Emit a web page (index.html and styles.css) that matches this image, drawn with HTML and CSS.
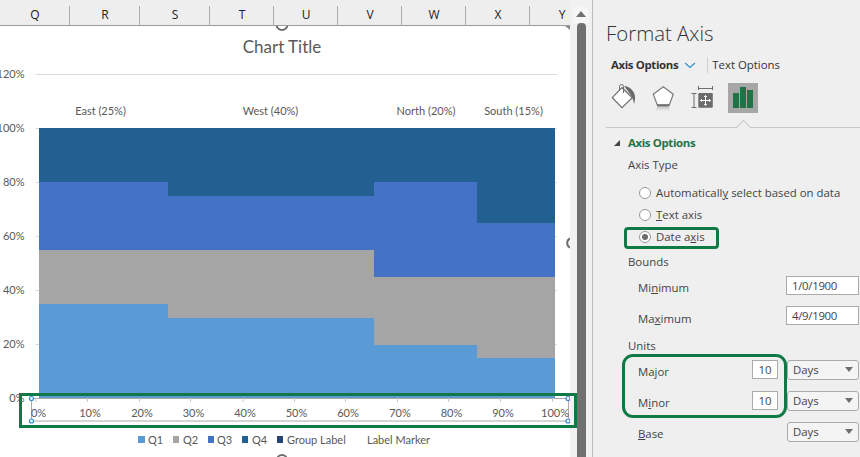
FILE: index.html
```html
<!DOCTYPE html>
<html lang="en">
<head>
<meta charset="utf-8">
<title>Format Axis</title>
<link rel="stylesheet" href="styles.css">
</head>
<body>
<div class="app">
  <div class="sheet">
    <div class="workspace">
      <div class="col-head">
        <div class="col c70">Q</div><div class="col c70">R</div><div class="col c70">S</div>
        <div class="col c64">T</div><div class="col c64">U</div><div class="col c64">V</div>
        <div class="col c64">W</div><div class="col c64">X</div><div class="col c64">Y</div>
      </div>
      <div class="chart-wrap">
        <svg class="chart" width="570" height="431" viewBox="0 26 570 431">
          <rect x="0" y="26" width="570" height="431" fill="#fff"/>
          <circle class="ring" cx="282" cy="24.500" r="5.500"/>
          <circle class="ring" cx="282" cy="460" r="5"/>
          <path class="ring" d="M570 238.500a5 5 0 0 0 0 9"/>
          <path d="M565 26h5v4z" fill="#8a8a8a"/>
          <text class="title" x="282" y="53" text-anchor="middle">Chart Title</text>

          <g class="grid">
            <path d="M35.500 74.500H557M35.500 128.500H557M35.500 182.500H557M35.500 236.500H557M35.500 290.500H557M35.500 344.500H557"/>
          </g>
          <g class="lbl" text-anchor="end">
            <text x="24.500" y="77.500">120%</text><text x="24.500" y="131.500">100%</text>
            <text x="24.500" y="185.500">80%</text><text x="24.500" y="239.500">60%</text>
            <text x="24.500" y="293.500">40%</text><text x="24.500" y="347.500">20%</text>
            <text x="24.500" y="401.500">0%</text>
          </g>
          <g class="lbl" text-anchor="middle">
            <text x="100.500" y="115">East (25%)</text>
            <text x="270.500" y="115">West (40%)</text>
            <text x="426" y="115">North (20%)</text>
            <text x="513.500" y="115">South (15%)</text>
          </g>

          <path fill="#236092" d="M39 128H555V223H477V182H374V196H168V182H39Z"/>
          <path fill="#4472C4" d="M39 182H168V196H374V182H477V223H555V277H374V250H39Z"/>
          <path fill="#A5A5A5" d="M39 250H374V277H555V358H477V345H374V318H168V304H39Z"/>
          <path fill="#5B9BD5" d="M39 304H168V318H374V345H477V358H555V398H39Z"/>

          <rect class="axis-box" x="31.500" y="398.500" width="537" height="22.500"/>
          <path class="tick" d="M36 398v4M87.500 398v4M139.500 398v4M190.500 398v4M243 398v4M294.500 398v4M345.500 398v4M397.500 398v4M448.500 398v4M500.500 398v4M552.500 398v4"/>
          <g class="lbl" text-anchor="middle">
            <text x="38.500" y="417">0%</text><text x="90" y="417">10%</text>
            <text x="142" y="417">20%</text><text x="193.500" y="417">30%</text>
            <text x="245" y="417">40%</text><text x="296.500" y="417">50%</text>
            <text x="348" y="417">60%</text><text x="400" y="417">70%</text>
            <text x="451.500" y="417">80%</text><text x="503" y="417">90%</text>
            <text x="555" y="417">100%</text>
          </g>
          <g class="handle">
            <circle cx="31.500" cy="398.500" r="2"/><circle cx="31.500" cy="421" r="2"/>
            <circle cx="568" cy="398.500" r="2"/><circle cx="568" cy="421" r="2"/>
          </g>

          <g class="lbl">
            <rect x="138" y="436" width="7" height="7" fill="#5B9BD5"/><text x="148" y="444">Q1</text>
            <rect x="173" y="436" width="6" height="7" fill="#A5A5A5"/><text x="183" y="444">Q2</text>
            <rect x="208" y="436" width="6" height="7" fill="#4472C4"/><text x="217" y="444">Q3</text>
            <rect x="242" y="436" width="6" height="7" fill="#236092"/><text x="252" y="444">Q4</text>
            <rect x="277" y="436" width="6" height="7" fill="#264478"/><text x="287" y="444">Group Label</text>
            <text x="367" y="444">Label Marker</text>
          </g>
        </svg>
        <div class="callout callout-axis"></div>
      </div>
    </div>
    <div class="scrollbar">
      <div class="scroll-up"></div>
      <div class="scroll-thumb"></div>
    </div>
  </div>

  <aside class="pane">
    <h1 class="pane-title">Format Axis</h1>
    <div class="tabs">
      <span class="tab-strong">Axis Options</span>
      <svg class="tab-chevron" width="12" height="7" viewBox="0 0 12 7"><path d="M1 1l5 4.500L11 1" fill="none" stroke="#2e8fd6" stroke-width="1.200"/></svg>
      <span class="tab-sep"></span>
      <span class="tab-plain">Text Options</span>
    </div>
    <div class="icons">
      <svg class="icon" width="30" height="30" viewBox="0 0 30 30">
        <path d="M16 3C21 3 25 7 26.500 11 27.500 14 27 18 26 21 25.500 18 25 15 22 11Z" fill="#6a6a6a"/>
        <path d="M4.300 14.700L14 4.700 24.300 14.700 14 24.700Z" fill="#fff" stroke="#6e6e6e" stroke-width="1.200"/>
        <path d="M11.500 7V3.500a2 2 0 0 1 4 0V10" fill="none" stroke="#6e6e6e" stroke-width="1"/>
      </svg>
      <svg class="icon" width="30" height="30" viewBox="0 0 30 30">
        <defs><linearGradient id="fade" x1="0" y1="0" x2="0" y2="1"><stop offset="0" stop-color="#bdbdbd"/><stop offset="1" stop-color="#efefef"/></linearGradient></defs>
        <path d="M9.500 23h11l2 5H7.500Z" fill="url(#fade)"/>
        <path d="M15.300 3.700L25.300 11.300 21.300 22H9.300L5.300 11.300Z" fill="#fff" stroke="#7a7a7a" stroke-width="1.200"/>
        <path d="M9 22.300h12.500" stroke="#6e6e6e" stroke-width="2"/>
      </svg>
      <svg class="icon" width="30" height="30" viewBox="0 0 30 30">
        <path d="M10.500 3v4M24.500 3v4M10.500 5.500h14M3.500 10.500h5M3.500 24.500h5M6 10.500v14" fill="none" stroke="#6e6e6e" stroke-width="1"/>
        <rect x="10.300" y="10" width="14.500" height="14.700" rx="1" fill="#6b6b6b"/>
        <path d="M17.500 12.500v10M12.500 17.500h10M16.200 14l1.300-1.500 1.300 1.500M16.200 21l1.300 1.500 1.300-1.500M14 16.200l-1.500 1.300 1.500 1.300M21 16.200l1.500 1.300-1.500 1.300" fill="none" stroke="#fff" stroke-width="1"/>
      </svg>
      <div class="icon-active">
        <svg width="30" height="30" viewBox="0 0 30 30">
          <rect x="5" y="10" width="6" height="15" fill="#217346"/>
          <rect x="12" y="4" width="6" height="21" fill="#217346"/>
          <rect x="19" y="7" width="6" height="18" fill="#217346"/>
        </svg>
      </div>
    </div>
    <div class="divider"></div>

    <div class="section-head"><span class="caret"></span><span>Axis Options</span></div>
    <div class="row row-type">Axis Type</div>
    <div class="radios">
      <div class="radio-row"><span class="radio"></span><span>Automaticall<u>y</u> select based on data</span></div>
      <div class="radio-row"><span class="radio"></span><span><u>T</u>ext axis</span></div>
      <div class="radio-row"><span class="radio radio-on"></span><span>Date a<u>x</u>is</span></div>
    </div>
    <div class="row row-bounds">Bounds</div>
    <div class="field field-first"><span class="field-label">Mi<u>n</u>imum</span><div class="input input-wide">1/0/1900</div></div>
    <div class="field field-max"><span class="field-label field-label-low">Ma<u>x</u>imum</span><div class="input input-wide">4/9/1900</div></div>
    <div class="row row-units">Units</div>
    <div class="field field-first"><span class="field-label">Ma<u>j</u>or</span><div class="input input-num">10</div><div class="select">Days<span class="select-arrow"></span></div></div>
    <div class="field"><span class="field-label">M<u>i</u>nor</span><div class="input input-num">10</div><div class="select">Days<span class="select-arrow"></span></div></div>
    <div class="field"><span class="field-label"><u>B</u>ase</span><div class="select">Days<span class="select-arrow"></span></div></div>
    <div class="row row-next">Vertical axis crosses</div>

    <div class="callout callout-date"></div>
    <div class="callout callout-units"></div>
  </aside>
</div>
</body>
</html>
```

FILE: styles.css
```css
* { box-sizing: border-box; }
html, body { margin: 0; padding: 0; height: 100%; overflow: hidden; }
body { background: #efefef; font-family: "Open Sans", "Liberation Sans", sans-serif; color: #333; }

.app { display: flex; width: 860px; height: 457px; overflow: hidden; position: relative; }
.sheet { display: flex; width: 592px; flex: none; }
.workspace { width: 570px; flex: none; display: flex; flex-direction: column; position: relative; z-index: 2; }

.col-head { display: flex; height: 26px; border-bottom: 1px solid #9c9c9c; background: #eeeeee; flex: none; overflow: hidden; }
.col { position: relative; flex: none; height: 25px; text-align: center; font-size: 12px; line-height: 30px; color: #222; }
.col::after { content: ""; position: absolute; right: 0; top: 6px; bottom: 0; width: 1px; background: #adadad; }
.c70 { width: 70px; }
.c64 { width: 64px; }

.chart-wrap { position: relative; flex: 1; }
.chart { display: block; overflow: hidden; }
.chart text { font-family: Lato, "Open Sans", sans-serif; }
.title { font-size: 17px; fill: #595959; }
.lbl { font-size: 11px; fill: #595959; }
.grid path { stroke: #d9d9d9; stroke-width: 1; fill: none; }
.ring { fill: none; stroke: #6e6e6e; stroke-width: 2; }
.axis-box { fill: #fff; stroke: #a9a9a9; stroke-width: 1; }
.tick { stroke: #c8c8c8; stroke-width: 1; fill: none; }
.handle circle { fill: #fff; stroke: #2e8fd6; stroke-width: 1.200; }

.callout { position: absolute; border: 3px solid #0f7a45; pointer-events: none; }
.callout-axis { left: 19px; top: 367px; width: 558px; height: 35px; }
.callout-date { left: 31px; top: 227px; width: 95px; height: 22px; border-radius: 4px; }
.callout-units { left: 29px; top: 354px; width: 165px; height: 64px; border-radius: 11px; }

.scrollbar { width: 22px; flex: none; background: #f1f1f1; position: relative; padding-top: 6px; }
.scroll-up { width: 16px; height: 17px; margin-left: 3px; background: #f6f6f6; border-radius: 8px 8px 0 0; position: relative; }
.scroll-up::after { content: ""; position: absolute; left: 3px; top: 5px; border-left: 5px solid transparent; border-right: 5px solid transparent; border-bottom: 6px solid #707070; }
.scroll-thumb { position: absolute; left: 7px; top: 23px; bottom: 0; width: 9px; background: #707070; border-radius: 4px 4px 0 0; }

.pane { position: relative; flex: 1; border-left: 1px solid #bcbcbc; padding-top: 20px; font-size: 11.400px; line-height: 20px; color: #444; }
.pane-title { margin: 0 0 0 13px; font-size: 20.400px; font-weight: 300; height: 26px; line-height: 26px; color: #333; }
.tabs { display: flex; align-items: center; height: 20px; margin-top: 9px; padding-left: 18px; }
.tab-strong { font-weight: 700; color: #333; letter-spacing: -0.350px; }
.tab-chevron { margin-left: 6px; }
.tab-sep { width: 1px; height: 16px; background: #cfcfcf; margin: 0 4px 0 11px; }
.tab-plain { color: #333; }
.icons { display: flex; gap: 10px; height: 30px; margin-top: 8px; padding-left: 15px; }
.icon { display: block; }
.icon-active { width: 30px; height: 30px; background: #a6a6a6; }
.icon-active svg { display: block; }
.divider { position: relative; height: 1px; margin: 14px 0 0 13px; background: #c8c8c8; }
.divider::after { content: ""; position: absolute; left: 132px; top: -5px; width: 10px; height: 10px; background: #efefef; border-left: 1px solid #c8c8c8; border-top: 1px solid #c8c8c8; transform: rotate(45deg); }

.section-head { display: flex; align-items: center; height: 18px; margin-top: 6px; padding-left: 21px; font-weight: 700; color: #217346; letter-spacing: -0.350px; position: relative; }
.caret { width: 0; height: 0; border-left: 6px solid transparent; border-bottom: 6px solid #444; margin-right: 8px; }
.row { height: 20px; padding-left: 35px; }
.row-type { margin-top: 3px; }
.radios { margin-top: 7px; }
.radio-row { display: flex; align-items: center; height: 22px; padding-left: 46px; gap: 5px; }
.radio { width: 12px; height: 12px; border: 1px solid #9a9a9a; border-radius: 50%; background: #fff; flex: none; position: relative; }
.radio-on::after { content: ""; position: absolute; left: 2px; top: 2px; width: 6px; height: 6px; border-radius: 50%; background: #6b6b6b; }
.row-bounds { margin-top: 4px; }
.field { display: flex; height: 20px; margin-top: 11px; padding: 0 1px 0 45px; gap: 9px; }
.field-first { margin-top: 4px; }
.field-max { margin-top: 10px; }
.field-label { flex: 1; padding-top: 2px; }
.field-label-low { padding-top: 3px; }
.input { height: 19px; border: 1px solid #ababab; background: #fff; line-height: 17px; }
.input-wide { width: 73px; padding-left: 5px; letter-spacing: -0.300px; }
.input-num { width: 26px; text-align: center; }
.select { width: 72px; height: 20px; border: 1px solid #ababab; border-radius: 3px; background: #f4f4f4; padding-left: 5px; line-height: 18px; position: relative; }
.select-arrow { position: absolute; right: 5px; top: 6px; border-left: 4px solid transparent; border-right: 4px solid transparent; border-top: 5px solid #6e6e6e; }
.row-units { margin-top: 10px; }
.row-next { margin-top: 9px; }
```
